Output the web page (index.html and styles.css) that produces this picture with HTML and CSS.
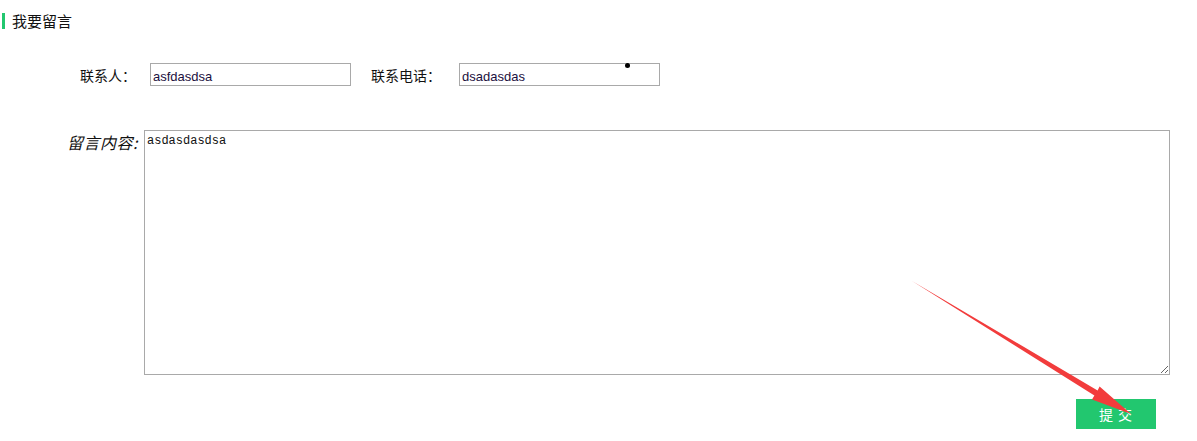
FILE: index.html
```html
<!DOCTYPE html>
<html lang="zh-CN">
<head>
    <meta charset="UTF-8">
    <meta name="viewport" content="width=device-width, initial-scale=1.0">
    <title>我要留言</title>
    <link rel="stylesheet" href="styles.css">
</head>
<body>
    <div class="page">
        <div class="title">我要留言</div>
        <form class="msg-form">
            <div class="row">
                <label class="lab">联系人：</label>
                <input type="text" class="txt" value="asfdasdsa" />
                <label class="lab lab2">联系电话：</label>
                <input type="text" class="txt" value="dsadasdas" />
            </div>
            <div class="row row-msg">
                <label class="lab-msg">留言内容:</label>
                <textarea class="content">asdasdasdsa</textarea>
            </div>
            <div class="row row-btn">
                <input type="button" class="btn" value="提 交" />
            </div>
        </form>
        <span class="dot"></span>
        <svg class="arrow" width="1197" height="441" viewBox="0 0 1197 441">
            <polygon points="912,281 1097.6,390.4 1099.6,386.5 1131,414 1092,399.5 1094.4,395.6" fill="#f23c3c" />
        </svg>
    </div>
</body>
</html>
```

FILE: styles.css
```css
body {
    margin: 0;
    font-family: "Noto Sans CJK SC", "Liberation Sans", sans-serif;
    color: #111;
}
.page {
    position: relative;
    width: 1197px;
    height: 428px;
    padding-top: 13px;
}
.title {
    margin-left: 2px;
    padding-left: 7px;
    border-left: 3px solid #22c76f;
    height: 16px;
    line-height: 16px;
    font-size: 15px;
}
.msg-form {
    margin: 0;
}
.row {
    display: flex;
    align-items: center;
}
.row:first-child {
    margin-top: 34px;
    padding-left: 80px;
}
.lab {
    font-size: 14px;
    width: 70px;
}
.lab2 {
    margin-left: 20px;
    width: 88px;
}
.txt {
    box-sizing: border-box;
    width: 201px;
    height: 23px;
    border: 1px solid #a9a9a9;
    margin: 0;
    padding: 4px 2px 0;
    font-family: "Liberation Sans", Arial, sans-serif;
    font-size: 13px;
    color: #1b1040;
    outline: none;
}
.row-msg {
    align-items: flex-start;
    margin-top: 44px;
}
.lab-msg {
    width: 138px;
    text-align: right;
    font-size: 16px;
    line-height: 20px;
    letter-spacing: 0.5px;
    font-style: italic;
    margin-right: 6px;
    margin-top: 2px;
}
.content {
    box-sizing: border-box;
    width: 1026px;
    height: 245px;
    margin: 0;
    border: 1px solid #a9a9a9;
    padding: 3px 2px;
    font-family: "Liberation Mono", monospace;
    font-size: 12px;
    color: #111;
    outline: none;
}
.row-btn {
    margin-top: 24px;
    padding-left: 1076px;
}
.btn {
    width: 80px;
    height: 30px;
    border: 0;
    margin: 0;
    background-color: #22c76f;
    color: #fff;
    font-family: "Noto Sans CJK SC", sans-serif;
    font-size: 14px;
    letter-spacing: 1px;
}
.dot {
    position: absolute;
    left: 625px;
    top: 63px;
    width: 5px;
    height: 5px;
    border-radius: 50%;
    background-color: #000;
}
.arrow {
    position: absolute;
    left: 0;
    top: 0;
    pointer-events: none;
}
```
